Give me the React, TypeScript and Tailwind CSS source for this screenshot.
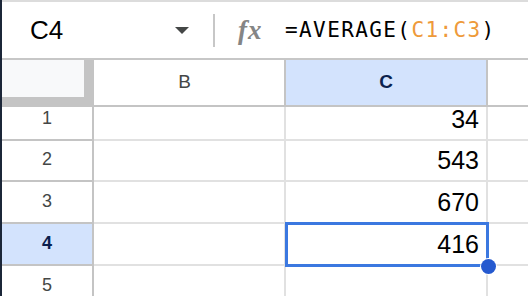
import React from "react";

type Row = {
  n: number;
  h: string;
  value?: string;
  selected?: boolean;
};

const rows: Row[] = [
  { n: 1, h: "h-[34px]", value: "34" },
  { n: 2, h: "h-[41px]", value: "543" },
  { n: 3, h: "h-[42px]", value: "670" },
  { n: 4, h: "h-[42px]", value: "416", selected: true },
  { n: 5, h: "h-[42px]" },
];

export default function App() {
  return (
    <div className="w-[528px] h-[296px] overflow-hidden flex bg-white font-['Liberation_Sans',Arial,sans-serif]">
      <div className="w-[2px] shrink-0 bg-[#1b2638]" />
      <div className="flex-1 flex flex-col">
        <div className="h-[2px] shrink-0 bg-[#dcdcdc]" />

        {/* formula bar */}
        <div className="h-[58px] shrink-0 flex items-center border-b-2 border-[#c7c7c7]">
          <div className="w-[197px] pl-[28px] pr-[10px] flex items-center justify-between">
            <span className="text-[26px] text-black">C4</span>
            <svg width="14" height="7" viewBox="0 0 14 7">
              <path d="M0 0h14L7 7z" fill="#444746" />
            </svg>
          </div>
          <div className="ml-[14px] w-[2px] h-[33px] bg-[#c7c7c7]" />
          <div className="ml-[23px] w-[47px] text-[27px] leading-none italic font-bold tracking-[1px] text-[#858585] font-['Liberation_Serif',serif]">
            fx
          </div>
          <div className="pt-[1px] text-[21px] tracking-[1.4px] text-black font-['DejaVu_Sans_Mono',monospace]">
            =AVERAGE(<span className="text-[#ee9a3a]">C1:C3</span>)
          </div>
        </div>

        {/* column headers */}
        <div className="h-[47px] shrink-0 flex border-b-2 border-[#c4c4c4]">
          <div className="w-[92px] shrink-0 bg-[#c4c4c4]">
            <div className="w-[82px] h-[37px] bg-[#f8f9fa]" />
          </div>
          <div className="w-[192px] shrink-0 flex items-center justify-center pr-[9px] border-r-2 border-[#c4c4c4] text-[19px] text-[#444746]">
            B
          </div>
          <div className="w-[202px] shrink-0 flex items-center justify-center bg-[#d3e3fd] border-r-2 border-[#c4c4c4] text-[19px] font-bold text-[#0b1f4e]">
            C
          </div>
          <div className="flex-1" />
        </div>

        {/* rows */}
        {rows.map((r) => (
          <div key={r.n} className="flex shrink-0">
            <div
              className={`w-[92px] shrink-0 ${r.h} flex items-end justify-center pb-[12px] border-r-2 border-b-2 border-[#c4c4c4] text-[18px] leading-none ${
                r.selected
                  ? "bg-[#d3e3fd] font-bold text-[#0b1f4e]"
                  : "text-[#444746]"
              }`}
            >
              {r.n}
            </div>
            <div
              className={`w-[192px] shrink-0 ${r.h} border-r-2 border-b-2 border-[#e1e1e1]`}
            />
            <div
              className={`relative w-[202px] shrink-0 ${r.h} flex items-end justify-end pr-[7px] pb-[7px] border-r-2 border-b-2 border-[#e1e1e1] text-[25px] leading-none text-black`}
            >
              {r.value}
              {r.selected && (
                <>
                  <div className="absolute -top-[2px] -left-[1px] right-[-3px] bottom-[-3px] border-[3px] border-[#3b78e0]" />
                  <div className="absolute right-[-10px] bottom-[-10px] w-[15px] h-[15px] rounded-full bg-[#2559cf] ring-1 ring-white z-10" />
                </>
              )}
            </div>
            <div className={`flex-1 ${r.h} border-b-2 border-[#e1e1e1]`} />
          </div>
        ))}
      </div>
    </div>
  );
}
